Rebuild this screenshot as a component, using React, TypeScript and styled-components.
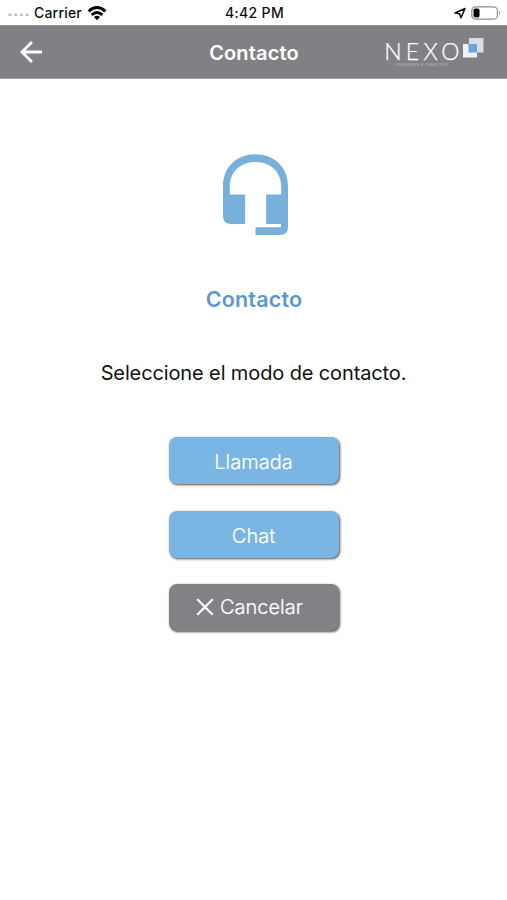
import React from "react";
import styled, { createGlobalStyle } from "styled-components";

const GlobalStyle = createGlobalStyle`
  * { box-sizing: border-box; }
  body { margin: 0; background: #fff; }
`;

const Screen = styled.div`
  display: flex;
  flex-direction: column;
  width: 507px;
  height: 900px;
  overflow: hidden;
  background: #fff;
  font-family: Inter, "Liberation Sans", sans-serif;
  color: #111;
`;

const StatusBar = styled.div`
  display: grid;
  grid-template-columns: 1fr auto 1fr;
  align-items: center;
  height: 25px;
  padding: 1px 6px 0 8px;
  font-size: 14px;
  font-weight: 500;
  line-height: 24px;
`;

const StatusSide = styled.div<{ $end?: boolean }>`
  display: flex;
  align-items: center;
  justify-content: ${(p) => (p.$end ? "flex-end" : "flex-start")};
  gap: 5px;
`;

const Carrier = styled.span`
  letter-spacing: 0.2px;
`;

const Time = styled.span`
  font-weight: 500;
  font-size: 14px;
  letter-spacing: 0.35px;
`;

const Header = styled.header`
  display: grid;
  grid-template-columns: 1fr auto 1fr;
  align-items: center;
  height: 54px;
  padding: 0 23px 0 19px;
  background: #818185;
  border-top: 1px solid #97979a;
  border-bottom: 1px solid #a0a0a2;
  color: #fff;
`;

const BackButton = styled.button`
  display: flex;
  width: 26px;
  padding: 0;
  border: 0;
  background: none;
`;

const Title = styled.h1`
  margin: 0;
  padding: 1px 0 0 5px;
  font-size: 20px;
  font-weight: 600;
  line-height: 26px;
  letter-spacing: 0.15px;
`;

const Brand = styled.div`
  display: flex;
  justify-self: end;
  gap: 2px;
  height: 30px;
`;

const BrandText = styled.div`
  display: flex;
  flex-direction: column;
  align-items: center;
  width: 78px;
`;

const BrandName = styled.span`
  font-family: Lato, sans-serif;
  font-size: 23px;
  font-weight: 300;
  line-height: 28px;
  letter-spacing: 4.3px;
  margin-right: -4px;
  white-space: nowrap;
  -webkit-text-stroke: 0.25px #fff;
`;

const BrandTag = styled.span`
  font-size: 4px;
  line-height: 4px;
  margin-top: -2px;
  letter-spacing: 0.35px;
  color: #bcbcc0;
  white-space: nowrap;
`;

const BrandMark = styled.svg`
  margin-top: 1px;
`;

const Content = styled.main`
  display: flex;
  flex-direction: column;
  align-items: center;
  padding-top: 74px;
`;

const Headset = styled.svg`
  margin-left: 3px;
`;

const Heading = styled.h2`
  margin: 49px 0 0 1px;
  font-size: 21.5px;
  font-weight: 600;
  line-height: 30px;
  letter-spacing: 0.2px;
  color: #5b98d0;
`;

const Prompt = styled.p`
  margin: 44px 0 49px;
  font-size: 20px;
  line-height: 30px;
  letter-spacing: -0.12px;
  white-space: nowrap;
`;

const Actions = styled.div`
  display: flex;
  flex-direction: column;
  gap: 26.5px;
`;

const ActionButton = styled.button<{ $muted?: boolean }>`
  display: flex;
  align-items: center;
  justify-content: center;
  gap: 6px;
  width: 170px;
  height: 47px;
  padding: ${(p) => (p.$muted ? "0 8px 1px 0" : "3px 0 0")};
  border: 0;
  border-radius: 8px;
  background: ${(p) => (p.$muted ? "#808286" : "#7bb5e3")};
  box-shadow: 1px 1px 2.5px rgba(0, 0, 0, 0.7);
  color: #fff;
  font-family: inherit;
  font-size: 20px;
  font-weight: 300;
  line-height: 26px;
  -webkit-text-stroke: 0.2px #fff;
`;

export default function App() {
  return (
    <>
      <GlobalStyle />
      <Screen>
        <StatusBar>
          <StatusSide>
            <svg width="21" height="6" viewBox="0 0 21 6" fill="#c2c2c4">
              <circle cx="2" cy="5" r="1.7" />
              <circle cx="7.7" cy="5" r="1.7" />
              <circle cx="13.4" cy="5" r="1.7" />
              <circle cx="19.1" cy="5" r="1.7" />
            </svg>
            <Carrier>Carrier</Carrier>
            <svg width="20" height="15" viewBox="0 0 20 15" fill="none" stroke="#000" strokeWidth="2.9">
              <path d="M1.6 5.3Q10 -2.2 18.4 5.3" />
              <path d="M4.7 8.8Q10 4.1 15.3 8.8" />
              <path d="M7 11.1Q10 8.4 13 11.1L10 14.2Z" fill="#000" stroke="none" />
            </svg>
          </StatusSide>
          <Time>4:42 PM</Time>
          <StatusSide $end>
            <svg width="12" height="12" viewBox="0 0 12 12" fill="none" stroke="#111" strokeWidth="1.5" strokeLinejoin="round">
              <path d="M11 1.5L1 6L5.6 6.8L7 10.8Z" />
            </svg>
            <svg width="30" height="14" viewBox="0 0 30 14">
              <rect x=".8" y=".8" width="25.6" height="12.4" rx="3.8" fill="none" stroke="#8f8f8f" strokeWidth="1.2" />
              <rect x="2.5" y="2.5" width="6" height="9" rx="1.8" fill="#000" />
              <path d="M28 4.7Q30 7 28 9.3Z" fill="#8f8f8f" />
            </svg>
          </StatusSide>
        </StatusBar>
        <Header>
          <BackButton aria-label="Volver">
            <svg width="25" height="24" viewBox="0 0 25 24" fill="none" stroke="#fff" strokeWidth="2.8">
              <path d="M23 12H3M13 2L3 12L13 22" />
            </svg>
          </BackButton>
          <Title>Contacto</Title>
          <Brand>
            <BrandText>
              <BrandName>NEXO</BrandName>
              <BrandTag>ASESORES &amp; DIRECTOS</BrandTag>
            </BrandText>
            <BrandMark width="21" height="21" viewBox="0 0 21 21">
              <rect x="6" y="0" width="14.5" height="14.5" fill="#dcdde0" />
              <rect x="0" y="6" width="14" height="13.5" fill="#f0f1f3" />
              <rect x="5.5" y="6" width="8.5" height="8.5" fill="#65a6df" />
            </BrandMark>
          </Brand>
        </Header>
        <Content>
          <Headset width="65" height="82" viewBox="0 0 64 82" preserveAspectRatio="none" fill="#78b0dc">
            <path d="M0 33C0 14 14 1.3 32 1.3S64 14 64 33V74Q64 82 56 82H32V74.3H57V71H42.5V41.5H57.3V34C57.3 19 47 9 32 9S6.7 19 6.7 34V41.5H21.8V71H8Q0 71 0 63Z" />
          </Headset>
          <Heading>Contacto</Heading>
          <Prompt>Seleccione el modo de contacto.</Prompt>
          <Actions>
            <ActionButton>Llamada</ActionButton>
            <ActionButton>Chat</ActionButton>
            <ActionButton $muted>
              <svg width="18" height="18" viewBox="0 0 18 18" fill="none" stroke="#fff" strokeWidth="2.2">
                <path d="M1.3 1.3L16.7 16.7M16.7 1.3L1.3 16.7" />
              </svg>
              Cancelar
            </ActionButton>
          </Actions>
        </Content>
      </Screen>
    </>
  );
}
